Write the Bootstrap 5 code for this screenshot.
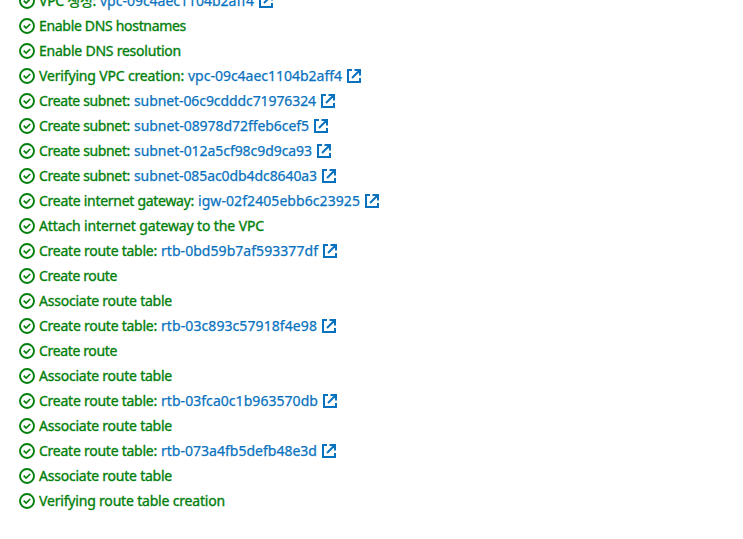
<!DOCTYPE html>
<html lang="en">
<head>
<meta charset="utf-8">
<meta name="viewport" content="width=device-width, initial-scale=1">
<title>Create VPC workflow</title>
<link href="https://cdn.jsdelivr.net/npm/bootstrap@5.3.0/dist/css/bootstrap.min.css" rel="stylesheet">
<style>
  body { font-family: "Noto Sans", "Noto Sans CJK KR", sans-serif; font-size: 14px; background: #fff; height: 539px; overflow: hidden; }
  .steps { margin-top: -12px; padding-left: 19px; }
  .step { height: 25px; line-height: 25px; color: #037f0c; white-space: nowrap; -webkit-text-stroke: .35px currentColor; }
  .step a { color: #0972be; margin-left: 4px; -webkit-text-stroke: .25px currentColor; }
  .status { width: 16px; height: 16px; margin-right: 4px; flex: none; }
  .external { width: 14px; height: 14px; margin-left: 5px; flex: none; color: #0972be; }
</style>
<script src="https://cdn.jsdelivr.net/npm/bootstrap@5.3.0/dist/js/bootstrap.bundle.min.js"></script>
</head>
<body>
<svg class="d-none">
  <symbol id="check" viewBox="0 0 16 16"><g fill="none" stroke="currentColor" stroke-width="1.9"><circle cx="8" cy="8" r="7"/><path stroke-width="1.7" d="M4.7 7.7 7.1 10 11.2 6"/></g></symbol>
  <symbol id="open" viewBox="0 0 14 14"><g fill="none" stroke="currentColor" stroke-width="2"><path d="M5 1H1V13H13V9M7.5 1H13V6.5M12.7 1.3 5 9"/></g></symbol>
</svg>
<ul class="steps list-unstyled mb-0" id="steps"></ul>
<script>
  // label, label width, resource id, resource width
  const steps = [
    ["VPC 생성:", 57, "vpc-09c4aec1104b2aff4", 154],
    ["Enable DNS hostnames", 147],
    ["Enable DNS resolution", 142],
    ["Verifying VPC creation:", 145, "vpc-09c4aec1104b2aff4", 154],
    ["Create subnet:", 91, "subnet-06c9cdddc71976324", 182],
    ["Create subnet:", 91, "subnet-08978d72ffeb6cef5", 175],
    ["Create subnet:", 91, "subnet-012a5cf98c9d9ca93", 178],
    ["Create subnet:", 91, "subnet-085ac0db4dc8640a3", 183],
    ["Create internet gateway:", 155, "igw-02f2405ebb6c23925", 162],
    ["Attach internet gateway to the VPC", 225],
    ["Create route table:", 118, "rtb-0bd59b7af593377df", 157],
    ["Create route", 78],
    ["Associate route table", 133],
    ["Create route table:", 118, "rtb-03c893c57918f4e98", 156],
    ["Create route", 78],
    ["Associate route table", 133],
    ["Create route table:", 118, "rtb-03fca0c1b963570db", 157],
    ["Associate route table", 133],
    ["Create route table:", 118, "rtb-073a4fb5defb48e3d", 156],
    ["Associate route table", 133],
    ["Verifying route table creation", 186]
  ];
  const list = document.getElementById("steps");
  const fit = (el, width) => {
    const spare = width - el.getBoundingClientRect().width;
    el.style.letterSpacing = spare / el.textContent.length + "px";
  };
  for (const [label, labelWidth, id, idWidth] of steps) {
    const li = document.createElement("li");
    li.className = "step d-flex align-items-center";
    li.innerHTML = `<svg class="status"><use href="#check"/></svg><span>${label}</span>` +
      (id ? `<a href="#" class="text-decoration-none">${id}</a><svg class="external"><use href="#open"/></svg>` : "");
    list.append(li);
    fit(li.querySelector("span"), labelWidth);
    if (id) fit(li.querySelector("a"), idWidth);
  }
</script>
</body>
</html>
